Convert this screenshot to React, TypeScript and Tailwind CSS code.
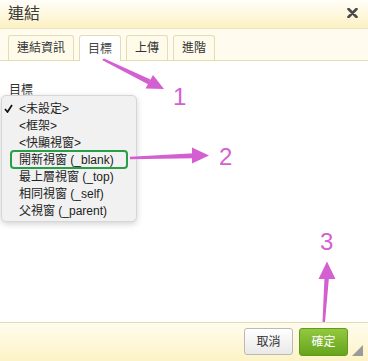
import React from 'react';

const font = { fontFamily: '"Liberation Sans", "Noto Sans CJK TC", sans-serif' };

const tabs = ['連結資訊', '目標', '上傳', '進階'];

const options = [
  '<未設定>',
  '<框架>',
  '<快顯視窗>',
  '開新視窗 (_blank)',
  '最上層視窗 (_top)',
  '相同視窗 (_self)',
  '父視窗 (_parent)',
];

const Arrows: React.FC = () => (
  <svg className="absolute inset-0 pointer-events-none" width="368" height="361" viewBox="0 0 368 361">
    <g fill="#d45fd1">
      {/* arrow 1 */}
      <polygon points="102,60 104,58.5 150.5,79.5 148.5,84.5" />
      <polygon points="164,89 145.5,88.5 153,75" />
      {/* arrow 2 */}
      <polygon points="130,156.8 130,159.2 194,158.2 194,153.2" />
      <polygon points="209,155.5 192,147.5 192,163.5" />
      {/* arrow 3 */}
      <polygon points="322.5,322 325,322 329,277 324.5,277" />
      <polygon points="327,261.5 318.5,279 335.5,279" />
    </g>
    <g fill="#d45fd1" fontFamily='"Liberation Sans", sans-serif' fontSize="24">
      <text x="173" y="105">1</text>
      <text x="219" y="164.5">2</text>
      <text x="320" y="250">3</text>
    </g>
  </svg>
);

export default function App() {
  return (
    <div className="relative w-[368px] h-[361px] flex flex-col bg-white overflow-hidden text-[#333]" style={font}>
      <header className="h-[29px] shrink-0 flex items-center justify-between pl-[8px] pr-[10px] border-b border-[#ebe3bd] bg-gradient-to-b from-[#fffef8] to-[#fcf1c3]">
        <span className="text-[16px] leading-none text-[#3a3a3a]">連結</span>
        <svg width="11" height="10" viewBox="0 0 11 10" className="mb-[2px]">
          <path d="M1.5 1 L9.5 9 M9.5 1 L1.5 9" stroke="#4a4a4a" strokeWidth="2.6" strokeLinecap="round" />
        </svg>
      </header>

      <div className="h-[32px] shrink-0 flex items-end gap-[5px] pl-[8px] border-b border-[#e4ddb2] bg-[#fffcef]">
        {tabs.map((t, i) =>
          i === 1 ? (
            <div key={t} className="h-[26px] -mb-px px-[8px] flex items-center text-[12px] bg-white border border-b-0 border-[#e4ddb2] rounded-t-[3px] text-[#444]">
              {t}
            </div>
          ) : (
            <div key={t} className="h-[25px] px-[8px] flex items-center text-[12px] bg-[#fffbea] border border-b-0 border-[#e4ddb2] rounded-t-[3px] text-[#333]">
              {t}
            </div>
          )
        )}
      </div>

      <main className="relative flex-1 bg-white pl-[9px] pt-[21px]">
        <div className="text-[12px] leading-[16px] text-[#333]">目標</div>

        <div className="absolute left-[1px] top-[34px] w-[136px] h-[127px] pt-[4px] bg-[#f1f1f1] border border-[#d6d6d6] rounded-[5px] shadow-[0_2px_6px_rgba(0,0,0,0.18)]">
          {options.map((o, i) => (
            <div key={o} className="relative h-[17px] flex items-center pl-[17px] text-[12px] text-[#222] whitespace-nowrap">
              {i === 0 && (
                <svg width="9" height="9" viewBox="0 0 9 9" className="absolute left-[2px] top-[4px]">
                  <path d="M1 5 L3.5 8 L8 1" stroke="#111" strokeWidth="1.7" fill="none" />
                </svg>
              )}
              {o}
              {i === 3 && (
                <span className="absolute left-[8px] top-[-1px] w-[118px] h-[19px] border-2 border-[#27a045] rounded-[4px]" />
              )}
            </div>
          ))}
        </div>
      </main>

      <footer className="relative h-[39px] shrink-0 flex justify-end items-start gap-[6px] pr-[20px] pt-[5px] border-t border-[#e4ddb2] bg-gradient-to-b from-[#fffcee] to-[#fdf3c6]">
        <button className="w-[49px] h-[27px] text-[12px] text-[#333] border border-[#b9b9b9] rounded-[3px] bg-gradient-to-b from-white to-[#e9e9e9]">
          取消
        </button>
        <button className="w-[49px] h-[28px] text-[12px] text-white border border-[#5f9b1c] rounded-[3px] bg-gradient-to-b from-[#93c83f] to-[#67a41b]">
          確定
        </button>
        <svg width="12" height="12" viewBox="0 0 12 12" className="absolute right-[4px] bottom-[4px]">
          <polygon points="11,0 11,11 0,11" fill="#9a9a9a" />
        </svg>
      </footer>

      <Arrows />
    </div>
  );
}
